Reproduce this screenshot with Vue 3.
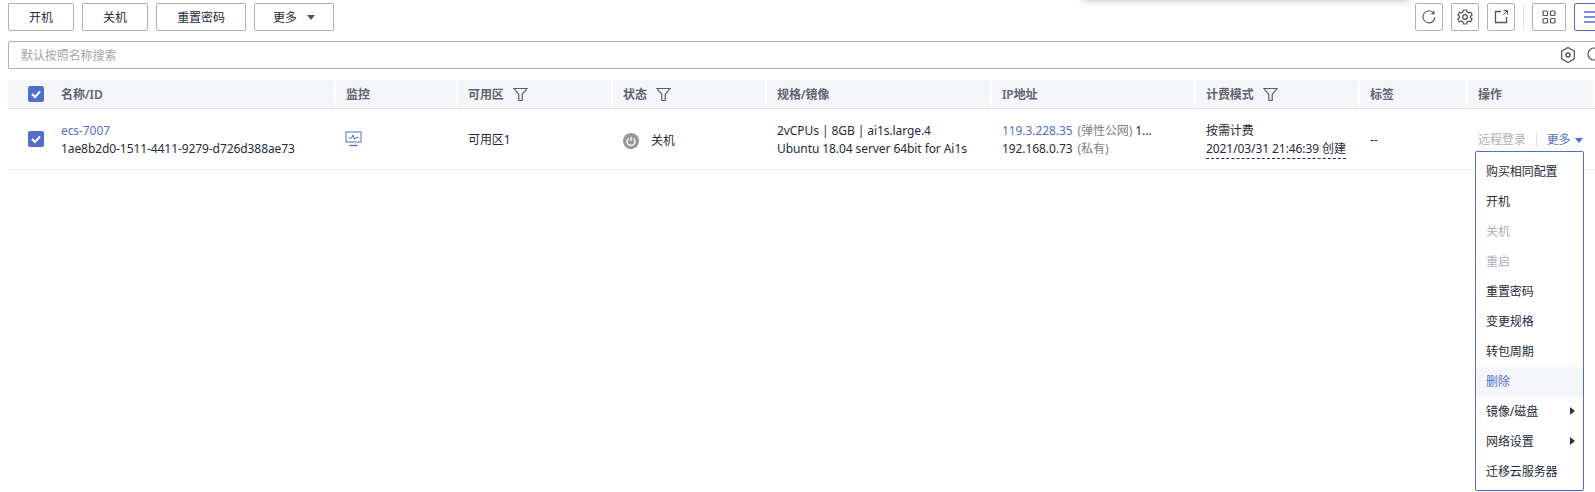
<script setup>
const leftButtons = [
  { label: '开机', width: 66 },
  { label: '关机', width: 66 },
  { label: '重置密码', width: 90 }
]
const menu = [
  { label: '购买相同配置' },
  { label: '开机' },
  { label: '关机', disabled: true },
  { label: '重启', disabled: true },
  { label: '重置密码' },
  { label: '变更规格' },
  { label: '转包周期' },
  { label: '删除', active: true },
  { label: '镜像/磁盘', sub: true },
  { label: '网络设置', sub: true },
  { label: '迁移云服务器' }
]
</script>

<template>
  <div class="page">
    <div class="top-shadow"></div>
    <div class="inner">
      <div class="toolbar">
        <div class="group">
          <button v-for="b in leftButtons" :key="b.label" class="btn" :style="{ width: b.width + 'px' }">{{ b.label }}</button>
          <button class="btn more-btn">更多<i class="caret"></i></button>
        </div>
        <div class="group right">
          <button class="icon-btn">
            <svg width="16" height="16" viewBox="0 0 16 16" fill="none" stroke="#555" stroke-width="1.1"><path d="M12.800 4.200A6 6 0 1 0 14 8" /><path d="M13 1.800v2.800h-2.600" /></svg>
          </button>
          <button class="icon-btn">
            <svg width="18" height="18" viewBox="0 0 18 18" fill="none" stroke="#555" stroke-width="1.2"><path d="M7.400 2h3.200l.5 2 1.500.8 2-.6 1.500 2.700-1.500 1.400v1.400l1.500 1.400-1.500 2.700-2-.6-1.500.8-.5 2H7.400l-.5-2-1.500-.8-2 .6-1.500-2.700 1.500-1.400V8.300L1.900 6.900l1.500-2.700 2 .6 1.500-.8z" /><circle cx="9" cy="9" r="2.300" /></svg>
          </button>
          <button class="icon-btn">
            <svg width="18" height="18" viewBox="0 0 18 18" fill="none" stroke="#555" stroke-width="1.300"><path d="M9 3.500H3.500v11h11V9" /><path d="M11.500 2.500h4v4" stroke-width="1" /><path d="M15 3l-3.500 3.500" stroke-width="1" /></svg>
          </button>
          <span class="divider"></span>
          <button class="icon-btn wide">
            <svg width="16" height="16" viewBox="0 0 16 16" fill="none" stroke="#555" stroke-width="1.200"><rect x="2" y="2" width="4.500" height="4.500" rx="1" /><rect x="9.500" y="2" width="4.500" height="4.500" rx="1" /><rect x="2" y="9.500" width="4.500" height="4.500" rx="1" /><rect x="9.500" y="9.500" width="4.500" height="4.500" rx="1" /></svg>
          </button>
          <button class="icon-btn wide selected">
            <svg width="16" height="16" viewBox="0 0 16 16" fill="none" stroke="#526ecc" stroke-width="1.500"><path d="M1 3h14M1 8h14M1 13h14" /></svg>
          </button>
        </div>
      </div>

      <div class="search">
        <span class="placeholder">默认按照名称搜索</span>
        <span class="search-icons">
          <svg width="16" height="18" viewBox="0 0 16 18" fill="none" stroke="#555" stroke-width="1.200"><path d="M8 1.500l6.300 3.700v7.600L8 16.500l-6.300-3.700V5.200z" /><circle cx="8" cy="9" r="2" stroke-width="1.500" /></svg>
          <svg width="16" height="16" viewBox="0 0 16 16" fill="none" stroke="#555" stroke-width="1.200"><circle cx="7" cy="7" r="6" /><path d="M11.500 11.500L15 15" /></svg>
        </span>
      </div>

      <div class="table">
        <div class="thead row-grid">
          <div class="th first">
            <span class="check"><svg width="16" height="16" viewBox="0 0 16 16" fill="none" stroke="#fff" stroke-width="2"><path d="M4 8l3 3 5-5.500" /></svg></span>
            <span>名称/ID</span>
          </div>
          <div class="th">监控</div>
          <div class="th">可用区<svg class="funnel" width="15" height="15" viewBox="0 0 15 15" fill="none" stroke="#575d6c" stroke-width="1.200"><path d="M1 1.500h13L9.200 7.500V13.500H5.800V7.500z" /></svg></div>
          <div class="th">状态<svg class="funnel" width="15" height="15" viewBox="0 0 15 15" fill="none" stroke="#575d6c" stroke-width="1.200"><path d="M1 1.500h13L9.200 7.500V13.500H5.800V7.500z" /></svg></div>
          <div class="th">规格/镜像</div>
          <div class="th">IP地址</div>
          <div class="th">计费模式<svg class="funnel" width="15" height="15" viewBox="0 0 15 15" fill="none" stroke="#575d6c" stroke-width="1.200"><path d="M1 1.500h13L9.200 7.500V13.500H5.800V7.500z" /></svg></div>
          <div class="th">标签</div>
          <div class="th">操作</div>
        </div>

        <div class="tbody row-grid">
          <div class="td first">
            <span class="check"><svg width="16" height="16" viewBox="0 0 16 16" fill="none" stroke="#fff" stroke-width="2"><path d="M4 8l3 3 5-5.500" /></svg></span>
            <div class="lines">
              <span class="link">ecs-7007</span>
              <span>1ae8b2d0-1511-4411-9279-d726d388ae73</span>
            </div>
          </div>
          <div class="td">
            <svg class="monitor" width="17" height="16" viewBox="0 0 17 16" fill="none" stroke="#526ecc" stroke-width="1"><rect x="1" y="1" width="15" height="10" /><path d="M3.500 7h3l1.500-3 1.500 4.500L11 6.500h2.500" /><path d="M4.500 14.500h8" stroke-width="1.400" /></svg>
          </div>
          <div class="td">可用区1</div>
          <div class="td status">
            <span class="power"><svg width="16" height="16" viewBox="0 0 16 16" fill="none" stroke="#fff" stroke-width="1.300"><path d="M5.700 5.200a4 4 0 1 0 4.600 0" /><path d="M8 3.800v4.200" /></svg></span>
            <span>关机</span>
          </div>
          <div class="td">
            <div class="lines">
              <span>2vCPUs | 8GB | ai1s.large.4</span>
              <span>Ubuntu 18.04 server 64bit for Ai1s</span>
            </div>
          </div>
          <div class="td">
            <div class="lines">
              <span><span class="link">119.3.228.35</span> <span class="muted gap">(弹性公网)</span> 1...</span>
              <span>192.168.0.73 <span class="muted gap">(私有)</span></span>
            </div>
          </div>
          <div class="td">
            <div class="lines">
              <span>按需计费</span>
              <span class="dashed">2021/03/31 21:46:39 创建</span>
            </div>
          </div>
          <div class="td">--</div>
          <div class="td ops">
            <span class="disabled">远程登录</span>
            <span class="op-sep"></span>
            <span class="link">更多</span>
            <i class="caret blue"></i>
          </div>
        </div>
      </div>
    </div>

    <ul class="menu">
      <li v-for="m in menu" :key="m.label" :class="{ disabled: m.disabled, active: m.active }">
        {{ m.label }}
        <i v-if="m.sub" class="sub-arrow"></i>
      </li>
    </ul>
  </div>
</template>

<style>
html, body { margin: 0; background: #fff; overflow: hidden; }
</style>

<style scoped>
.page {
  position: relative;
  width: 1595px;
  height: 492px;
  overflow: hidden;
  background: #fff;
  color: #252b3a;
  font: 12px/18px "Noto Sans", "Noto Sans CJK SC", sans-serif;
  letter-spacing: -0.08px;
}
.top-shadow {
  position: absolute;
  left: 1082px;
  top: -10px;
  width: 328px;
  height: 10px;
  box-shadow: 0 1px 7px rgba(0, 0, 0, .22);
}
.inner { width: 1608px; padding: 3px 0 0 8px; box-sizing: border-box; }
.toolbar { display: flex; justify-content: space-between; height: 28px; }
.group { display: flex; gap: 8px; align-items: center; }
.btn {
  height: 28px;
  box-sizing: border-box;
  border: 1px solid #adb0b8;
  border-radius: 2px;
  background: #fff;
  color: #252b3a;
  font: inherit;
  letter-spacing: inherit;
  padding: 2px 0 0;
}
.more-btn {
  width: 80px;
  display: flex;
  align-items: center;
  justify-content: center;
  gap: 10px;
}
.caret {
  width: 0; height: 0;
  border-left: 4px solid transparent;
  border-right: 4px solid transparent;
  border-top: 5px solid #555;
}
.more-btn .caret { margin-top: -2px; }
.caret.blue { border-top-color: #526ecc; margin-left: 4px; }
.icon-btn {
  width: 28px;
  height: 28px;
  padding: 0;
  box-sizing: border-box;
  border: 1px solid #adb0b8;
  border-radius: 2px;
  background: #fff;
  display: flex;
  align-items: center;
  justify-content: center;
}
.icon-btn.wide { width: 34px; }
.icon-btn.selected { border-color: #526ecc; }
.divider { width: 1px; height: 24px; background: #dfe1e6; }
.search {
  height: 28px;
  margin-top: 10px;
  box-sizing: border-box;
  border: 1px solid #adb0b8;
  border-radius: 2px;
  display: flex;
  align-items: center;
  justify-content: space-between;
  padding: 0 0 0 12px;
}
.placeholder { color: #a2a5ad; padding-top: 2px; }
.search-icons { display: flex; align-items: center; gap: 11px; margin-right: 4px; }
.table { margin-top: 11px; }
.row-grid {
  display: grid;
  grid-template-columns: 326px 122px 155px 154px 225px 204px 164px 108px 127px;
}
.thead { height: 28px; border-bottom: 1px solid #dfe1e6; box-sizing: content-box; }
.th {
  display: flex;
  align-items: center;
  background: #f4f6fa;
  border-left: 2px solid #fff;
  padding: 2px 0 0 10px;
  color: #5f6470;
  font-weight: 600;
}
.th:first-child { border-left: 0; }
.th.first { padding-left: 20px; gap: 17px; }
.funnel { margin-left: 9px; margin-top: -2px; }
.check {
  width: 16px;
  height: 16px;
  border-radius: 2px;
  background: #526ecc;
  flex: none;
  display: block;
  margin-top: -2px;
}
.check svg { display: block; }
.tbody { height: 61px; border-bottom: 1px solid #e8eaef; box-sizing: border-box; }
.td {
  display: flex;
  align-items: center;
  padding: 2px 0 0 12px;
  white-space: nowrap;
}
.td.first { padding-left: 20px; gap: 17px; }
.lines { display: flex; flex-direction: column; }
.link { color: #526ecc; }
.muted { color: #7b7f89; }
.gap { margin-left: 2px; }
.disabled { color: #adb0b8; }
.monitor { margin-left: -1px; margin-bottom: 3px; }
.td.status { gap: 12px; padding-top: 4px; }
.power {
  width: 16px;
  height: 16px;
  border-radius: 50%;
  background: #96989e;
  display: block;
}
.power svg { display: block; }
.dashed {
  border-bottom: 1px dashed #252b3a;
  line-height: 18px;
}
.op-sep { width: 1px; height: 14px; background: #dfe1e6; margin: 0 10px; }
.menu {
  position: absolute;
  left: 1475px;
  top: 151px;
  width: 109px;
  box-sizing: border-box;
  margin: 0;
  padding: 5px 0 3px;
  list-style: none;
  background: #fff;
  border: 1px solid #526ecc;
  border-radius: 2px;
}
.menu li {
  position: relative;
  height: 30px;
  line-height: 30px;
  padding-left: 10px;
}
.menu li.disabled { color: #adb0b8; }
.menu li.active { background: #f4f6fa; color: #526ecc; }
.sub-arrow {
  position: absolute;
  right: 8px;
  top: 10px;
  width: 0; height: 0;
  border-top: 4px solid transparent;
  border-bottom: 4px solid transparent;
  border-left: 5px solid #333;
}
</style>
